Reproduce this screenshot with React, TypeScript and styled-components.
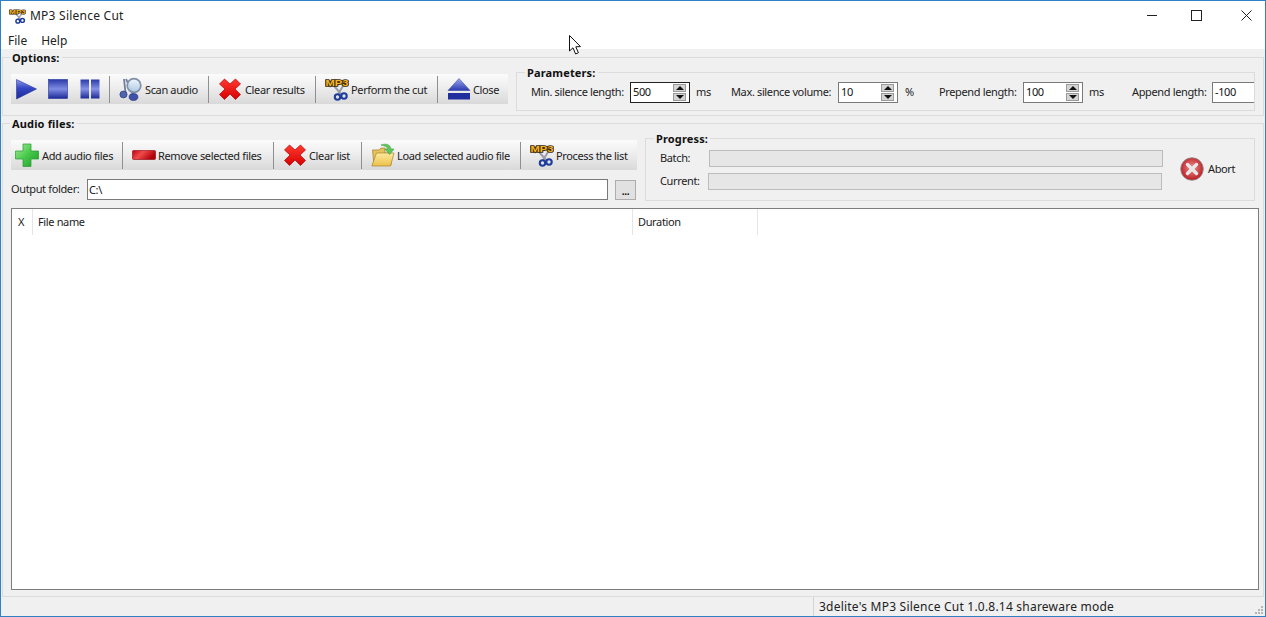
import React from "react";
import styled, { createGlobalStyle } from "styled-components";

const Global = createGlobalStyle`
  html, body { margin: 0; padding: 0; background: #f0f0f0; }
  body { font-family: "Noto Sans", "Open Sans", sans-serif; font-size: 11px; letter-spacing: -0.36px; color: #222; overflow: hidden; }
  * { box-sizing: border-box; }
`;

const Win = styled.div`
  position: relative; width: 1266px; height: 617px; display: flex; flex-direction: column;
  border: 1px solid #2f80c4; background: #f0f0f0; overflow: hidden;
`;
const TitleBar = styled.div`
  height: 31px; background: #fff; display: flex; align-items: center; padding: 0 0 2px 8px; flex: none;
`;
const AppIcon = styled.span`display: flex; width: 17px; height: 17px; margin-right: 4px;`;
const TitleText = styled.span`font-size: 12px; color: #222; flex: 1; letter-spacing: 0.24px;`;
const WinBtn = styled.span<{ $w: number; $mr?: number }>`
  width: ${p => p.$w}px; height: 29px; display: flex; align-items: center; justify-content: center; margin-right: ${p => p.$mr ?? 0}px;
`;
const MenuBar = styled.div`
  height: 17px; background: #fff; display: flex; gap: 14px; padding-left: 7px; align-items: center; flex: none;
  font-size: 12px; color: #222; letter-spacing: 0;
`;
const Group = styled.fieldset<{ $pad: string; $flex?: string; $col?: boolean; $mt?: number; $ms?: number }>`
  margin: ${p => p.$mt ?? 0}px ${p => p.$ms ?? 0}px 0;
  padding: ${p => p.$pad};
  border: 1px solid #dcdcdc; min-width: 0; flex: ${p => p.$flex ?? "none"};
  display: flex; ${p => p.$col ? "flex-direction: column;" : ""}
`;
const Legend = styled.legend<{ $ml?: number }>`
  font-weight: 700; font-size: 11px; line-height: 14px; height: 14px; padding: 1px 2px 0; margin-left: ${p => p.$ml ?? -6}px; color: #111; letter-spacing: .15px;
`;
const Row = styled.div`display: flex; align-items: flex-start; min-width: 0; gap: 8px;`;
const Toolbar = styled.div<{ $w: number }>`
  display: flex; align-items: stretch; height: 30px; width: ${p => p.$w}px; flex: none; margin-top: 10px;
  background: linear-gradient(#fbfbfb 0%, #f1f1f1 35%, #d9d9d9 100%);
`;
const Transport = styled.div`display: flex; align-items: center; gap: 8px; padding: 0 7px 0 3px;`;
const TextBtn = styled.div<{ $w?: number; $pl?: number; $gap?: number }>`
  display: flex; align-items: center; gap: ${p => p.$gap ?? 2}px; padding-left: ${p => p.$pl ?? 9}px;
  ${p => p.$w ? `width: ${p.$w}px;` : ""} flex: none; white-space: nowrap; color: #222;
`;
const Sep = styled.div`width: 1px; margin: 2px 0 1px; background: #8f8f8f; flex: none;`;
const Params = styled.div`display: flex; align-items: center; height: 21px; white-space: nowrap; overflow: hidden;`;
const Lbl = styled.span<{ $w: number; $pl?: number }>`
  width: ${p => p.$w}px; padding: 0 0 2px ${p => p.$pl ?? 0}px; flex: none; white-space: nowrap; color: #222;
`;
const Spin = styled.div<{ $focus?: boolean }>`
  width: 60px; height: 21px; flex: none; background: #fff; border: 1px solid ${p => p.$focus ? "#222" : "#7a7a7a"};
  display: flex; align-items: center; padding: 0 3px 0 2px;
`;
const SpinValue = styled.span`flex: 1; color: #111; padding-bottom: 2px;`;
const SpinBtns = styled.div`display: flex; flex-direction: column; gap: 1px; width: 13px;`;
const SpinBtn = styled.div`
  height: 8px; background: #d4d4d4; border: 1px solid #9a9a9a; display: flex; align-items: center; justify-content: center;
`;
const Arrow = styled.span<{ $up?: boolean }>`
  width: 0; height: 0; border-left: 4px solid transparent; border-right: 4px solid transparent;
  ${p => p.$up ? "border-bottom: 4px solid #111;" : "border-top: 4px solid #111;"}
`;
const Stack = styled.div`display: flex; flex-direction: column;`;
const OutputRow = styled.div`display: flex; align-items: flex-start; height: 21px; margin-top: 9px;`;
const OutputLabel = styled.span`width: 76px; flex: none; line-height: 20px;`;
const TextInput = styled.div`
  width: 521px; height: 21px; background: #fff; border: 1px solid #7a7a7a; padding: 0 1px; display: flex; align-items: center; color: #111; flex: none;
`;
const DotsBtn = styled.div`
  width: 21px; height: 20px; margin: 1px 0 0 7px; background: #e1e1e1; border: 1px solid #adadad; display: flex; align-items: center; justify-content: center;
  font-weight: 700; font-size: 10px; padding-top: 2px; flex: none; color: #111;
`;
const Bars = styled.div`display: flex; flex-direction: column; gap: 6px;`;
const BarRow = styled.div`display: flex; align-items: center; height: 17px;`;
const Bar = styled.div`width: 454px; height: 17px; background: #e6e6e6; border: 1px solid #bcbcbc; flex: none;`;
const Abort = styled.div`display: flex; align-items: center; align-self: flex-start; gap: 4px; margin: 7px 0 0 17px;`;
const AbortLabel = styled.span`padding-bottom: 2px;`;
const List = styled.div`
  width: 1248px; height: 382px; margin-top: 7px; background: #fff; border: 1px solid #7d7d7d; flex: none;
`;
const ListHead = styled.div`display: flex; height: 26px; background: #fff;`;
const Col = styled.div<{ $w: number; $pl?: number }>`
  width: ${p => p.$w}px; display: flex; align-items: center; padding: 0 0 2px ${p => p.$pl ?? 5}px; border-right: 1px solid #e5e5e5; color: #222;
`;
const Status = styled.div`
  height: 19px; flex: none; display: flex; background: #f0f0f0; align-items: center; position: relative;
`;
const StatusPane = styled.div`width: 813px; height: 100%; border-right: 1px solid #d4d4d4; flex: none;`;
const StatusText = styled.span`font-size: 12px; margin-left: 5px; color: #222; letter-spacing: .22px;`;
const Grip = styled.svg`position: absolute; right: 1px; bottom: 1px;`;
const Cursor = styled.svg`position: absolute; left: 567px; top: 33px; pointer-events: none;`;

const Grad = ({ id, stops, x2 = 0, y2 = 1 }: any) => (
  <linearGradient id={id} x1="0" y1="0" x2={x2} y2={y2}>
    {stops.map((s: any, i: number) => <stop key={i} offset={s[0]} stopColor={s[1]} />)}
  </linearGradient>
);
const blue = [[0, "#8e9be8"], [0.45, "#3446c4"], [1, "#1c2a98"]];

const PlayIcon = () => (
  <svg width="24" height="24" viewBox="0 0 24 24"><defs><Grad id="pl" stops={blue} /></defs>
    <path d="M2.5 2.5 L22.5 12 L2.5 22 Z" fill="url(#pl)" stroke="#2a389f" strokeWidth=".6" /></svg>
);
const StopIcon = () => (
  <svg width="24" height="24" viewBox="0 0 24 24"><defs><Grad id="st" stops={[[0, "#2a3aa8"], [0.5, "#7f8ce4"], [1, "#1c2a98"]]} /></defs>
    <rect x="2.5" y="2.5" width="19" height="19" fill="url(#st)" stroke="#24329f" strokeWidth=".6" /></svg>
);
const PauseIcon = () => (
  <svg width="24" height="24" viewBox="0 0 24 24"><defs><Grad id="pa" stops={[[0, "#2a3aa8"], [0.5, "#8592e6"], [1, "#1c2a98"]]} /></defs>
    <rect x="2.5" y="2.5" width="8.5" height="19" fill="url(#pa)" /><rect x="13" y="2.5" width="8.5" height="19" fill="url(#pa)" /></svg>
);
const ScanIcon = () => (
  <svg width="24" height="24" viewBox="0 0 24 24"><defs><Grad id="sn" stops={[[0, "#eef6fc"], [1, "#a9c6e4"]]} /></defs>
    <path d="M5 2 L6.5 16 M7 2 L15 19" stroke="#6f7f9f" strokeWidth="1.8" fill="none" />
    <ellipse cx="4.5" cy="17.5" rx="3.6" ry="3.4" fill="#4f64ae" stroke="#2c3a80" strokeWidth=".7" />
    <ellipse cx="14.5" cy="20" rx="4.4" ry="3.4" fill="#3f52a8" stroke="#26347c" strokeWidth=".7" />
    <circle cx="15" cy="8.5" r="6.8" fill="url(#sn)" fillOpacity=".92" stroke="#7f8fa6" strokeWidth="1.7" />
  </svg>
);
const XIcon = () => (
  <svg width="24" height="24" viewBox="0 0 24 24"><defs><Grad id="xr" stops={[[0, "#ff3a30"], [1, "#d80000"]]} /></defs>
    <path d="M6.5 2 L12 7 L17.5 2 L22.5 7 L17 12 L22.5 17.5 L17.5 22.5 L12 17 L6.5 22.5 L1.5 17.5 L7 12 L1.5 7 Z" fill="url(#xr)" stroke="#b00000" strokeWidth=".7" strokeLinejoin="round" /></svg>
);
const MP3Icon = ({ size = 24 }: { size?: number }) => (
  <svg width={size} height={size} viewBox="0 0 24 24">
    <path d="M9 9 L17 18 M18 9 L12.5 18" stroke="#9a9ca6" strokeWidth="2" />
    <circle cx="12.5" cy="20" r="2.7" fill="none" stroke="#1f3d9c" strokeWidth="2.1" />
    <circle cx="19" cy="19" r="2.7" fill="none" stroke="#1f3d9c" strokeWidth="2.1" />
    <text x="12" y="9.4" textAnchor="middle" textLength="23" lengthAdjust="spacingAndGlyphs" fontFamily="Liberation Sans, sans-serif" fontWeight="700" fontSize="8.5"
      fill="#f4b428" stroke="#3c2a08" strokeWidth="1.7" paintOrder="stroke" letterSpacing="0">MP3</text>
  </svg>
);
const EjectIcon = () => (
  <svg width="24" height="24" viewBox="0 0 24 24"><defs><Grad id="ej" stops={[[0, "#9ba8ee"], [1, "#2a3ab0"]]} /></defs>
    <path d="M12 1.5 L23 13.5 L1 13.5 Z" fill="url(#ej)" stroke="#2a389f" strokeWidth=".5" />
    <rect x="1" y="16" width="22" height="6.5" fill="#1f2d9e" /></svg>
);
const PlusIcon = () => (
  <svg width="24" height="24" viewBox="0 0 24 24"><defs><Grad id="pg" stops={[[0, "#a4ee98"], [0.5, "#46c84a"], [1, "#1e9a2a"]]} x2={1} /></defs>
    <path d="M8 1 H16 V8 H23.5 V16 H16 V23.5 H8 V16 H.5 V8 H8 Z" fill="url(#pg)" stroke="#2a9a34" strokeWidth=".7" /></svg>
);
const MinusIcon = () => (
  <svg width="24" height="24" viewBox="0 0 24 24"><defs><Grad id="mr" stops={[[0, "#c00010"], [0.45, "#f04a4a"], [1, "#b00008"]]} x2={1} y2={0.4} /></defs>
    <rect x=".5" y="7.5" width="23" height="9" rx="1" fill="url(#mr)" stroke="#8c0008" strokeWidth=".6" /></svg>
);
const FolderIcon = () => (
  <svg width="24" height="24" viewBox="0 0 24 24"><defs><Grad id="fo" stops={[[0, "#fdeaa0"], [1, "#ecc048"]]} /></defs>
    <path d="M1.5 7 H8 L10 5 H14 V10 H20 V22 H3 Z" fill="#e6c25e" stroke="#a07c20" strokeWidth=".7" />
    <path d="M5.5 10 H23 L19.5 23 H.8 Z" fill="url(#fo)" stroke="#a9842a" strokeWidth=".7" />
    <path d="M10 2 C15 0 19.5 1.5 20 6 L23 6 L18.5 11.5 L14 6 L17 6 C16.5 4 14 2.8 10 2 Z" fill="#5ec85a" stroke="#2e8e34" strokeWidth=".5" /></svg>
);
const AbortIcon = () => (
  <svg width="24" height="24" viewBox="0 0 24 24"><defs>
    <radialGradient id="ab" cx=".5" cy=".45" r=".55"><stop offset="0" stopColor="#f09090" /><stop offset="1" stopColor="#b81c22" /></radialGradient></defs>
    <circle cx="12" cy="12" r="11.3" fill="url(#ab)" stroke="#8c8c8c" strokeWidth=".8" />
    <path d="M7.5 7.5 L16.5 16.5 M16.5 7.5 L7.5 16.5" stroke="#e8e8e8" strokeWidth="3.4" strokeLinecap="round" /></svg>
);

const SpinBox = ({ v, focus }: { v: string; focus?: boolean }) => (
  <Spin $focus={focus}>
    <SpinValue>{v}</SpinValue>
    <SpinBtns><SpinBtn><Arrow $up /></SpinBtn><SpinBtn><Arrow /></SpinBtn></SpinBtns>
  </Spin>
);

export default function App() {
  return (
    <Win>
      <Global />
      <TitleBar>
        <AppIcon><MP3Icon size={17} /></AppIcon>
        <TitleText>MP3 Silence Cut</TitleText>
        <WinBtn $w={42}><svg width="11" height="11"><path d="M0 5.5H10" stroke="#222" /></svg></WinBtn>
        <WinBtn $w={46} $mr={8}><svg width="11" height="11"><rect x=".5" y=".5" width="10" height="10" fill="none" stroke="#222" /></svg></WinBtn>
        <WinBtn $w={38}><svg width="11" height="11"><path d="M.5 .5L10.5 10.5M10.5 .5L.5 10.5" stroke="#222" /></svg></WinBtn>
      </TitleBar>
      <MenuBar><span>File</span><span>Help</span></MenuBar>

      <Group $pad="0 8px 4px 8px" $ms={1} $mt={1}>
        <Legend $ml={-1}>Options:</Legend>
        <Row>
          <Toolbar $w={497}>
            <Transport><PlayIcon /><StopIcon /><PauseIcon /></Transport>
            <Sep />
            <TextBtn $w={98}><ScanIcon /><span>Scan audio</span></TextBtn>
            <Sep />
            <TextBtn $w={106} $gap={3}><XIcon /><span>Clear results</span></TextBtn>
            <Sep />
            <TextBtn $w={121}><MP3Icon /><span>Perform the cut</span></TextBtn>
            <Sep />
            <TextBtn><EjectIcon /><span>Close</span></TextBtn>
          </Toolbar>
          <Group $pad="3px 0 7px 14px" $flex="0 0 739px" $col $mt={1}>
            <Legend>Parameters:</Legend>
            <Params>
              <Lbl $w={99}>Min. silence length:</Lbl>
              <SpinBox v="500" focus />
              <Lbl $w={41} $pl={6}>ms</Lbl>
              <Lbl $w={107}>Max. silence volume:</Lbl>
              <SpinBox v="10" />
              <Lbl $w={41} $pl={7}>%</Lbl>
              <Lbl $w={84}>Prepend length:</Lbl>
              <SpinBox v="100" />
              <Lbl $w={49} $pl={6}>ms</Lbl>
              <Lbl $w={80}>Append length:</Lbl>
              <Spin><SpinValue>-100</SpinValue></Spin>
            </Params>
          </Group>
        </Row>
      </Group>

      <Group $pad="0 0 6px 8px" $ms={1} $flex="1" $col>
        <Legend $ml={-1}>Audio files:</Legend>
        <Row>
          <Stack>
            <Toolbar $w={626}>
              <TextBtn $w={111} $pl={4} $gap={3}><PlusIcon /><span>Add audio files</span></TextBtn>
              <Sep />
              <TextBtn $w={150}><MinusIcon /><span>Remove selected files</span></TextBtn>
              <Sep />
              <TextBtn $w={87}><XIcon /><span>Clear list</span></TextBtn>
              <Sep />
              <TextBtn $w={158}><FolderIcon /><span>Load selected audio file</span></TextBtn>
              <Sep />
              <TextBtn><MP3Icon /><span>Process the list</span></TextBtn>
            </Toolbar>
            <OutputRow>
              <OutputLabel>Output folder:</OutputLabel>
              <TextInput>C:\</TextInput>
              <DotsBtn>...</DotsBtn>
            </OutputRow>
          </Stack>
          <Group $pad="5px 0 10px 14px" $flex="0 0 610px" $mt={1}>
            <Legend>Progress:</Legend>
            <Bars>
              <BarRow><Lbl $w={49}>Batch:</Lbl><Bar /></BarRow>
              <BarRow><Lbl $w={48}>Current:</Lbl><Bar /></BarRow>
            </Bars>
            <Abort><AbortIcon /><AbortLabel>Abort</AbortLabel></Abort>
          </Group>
        </Row>
        <List>
          <ListHead>
            <Col $w={21} $pl={6}>X</Col>
            <Col $w={600}>File name</Col>
            <Col $w={125}>Duration</Col>
          </ListHead>
        </List>
      </Group>

      <Status>
        <StatusPane />
        <StatusText>3delite's MP3 Silence Cut 1.0.8.14 shareware mode</StatusText>
        <Grip width="10" height="10">
          {[[7, 1], [4, 4], [7, 4], [1, 7], [4, 7], [7, 7]].map(([x, y], i) => <rect key={i} x={x} y={y} width="2" height="2" fill="#b5b5b5" />)}
        </Grip>
      </Status>

      <Cursor width="16" height="22" viewBox="0 0 16 22">
        <path d="M1.5 1.5 V17 L5 13.8 L7.6 20 L10.4 18.8 L7.8 12.8 L12.5 12.6 Z" fill="#fff" stroke="#111" strokeWidth="1" />
      </Cursor>
    </Win>
  );
}
